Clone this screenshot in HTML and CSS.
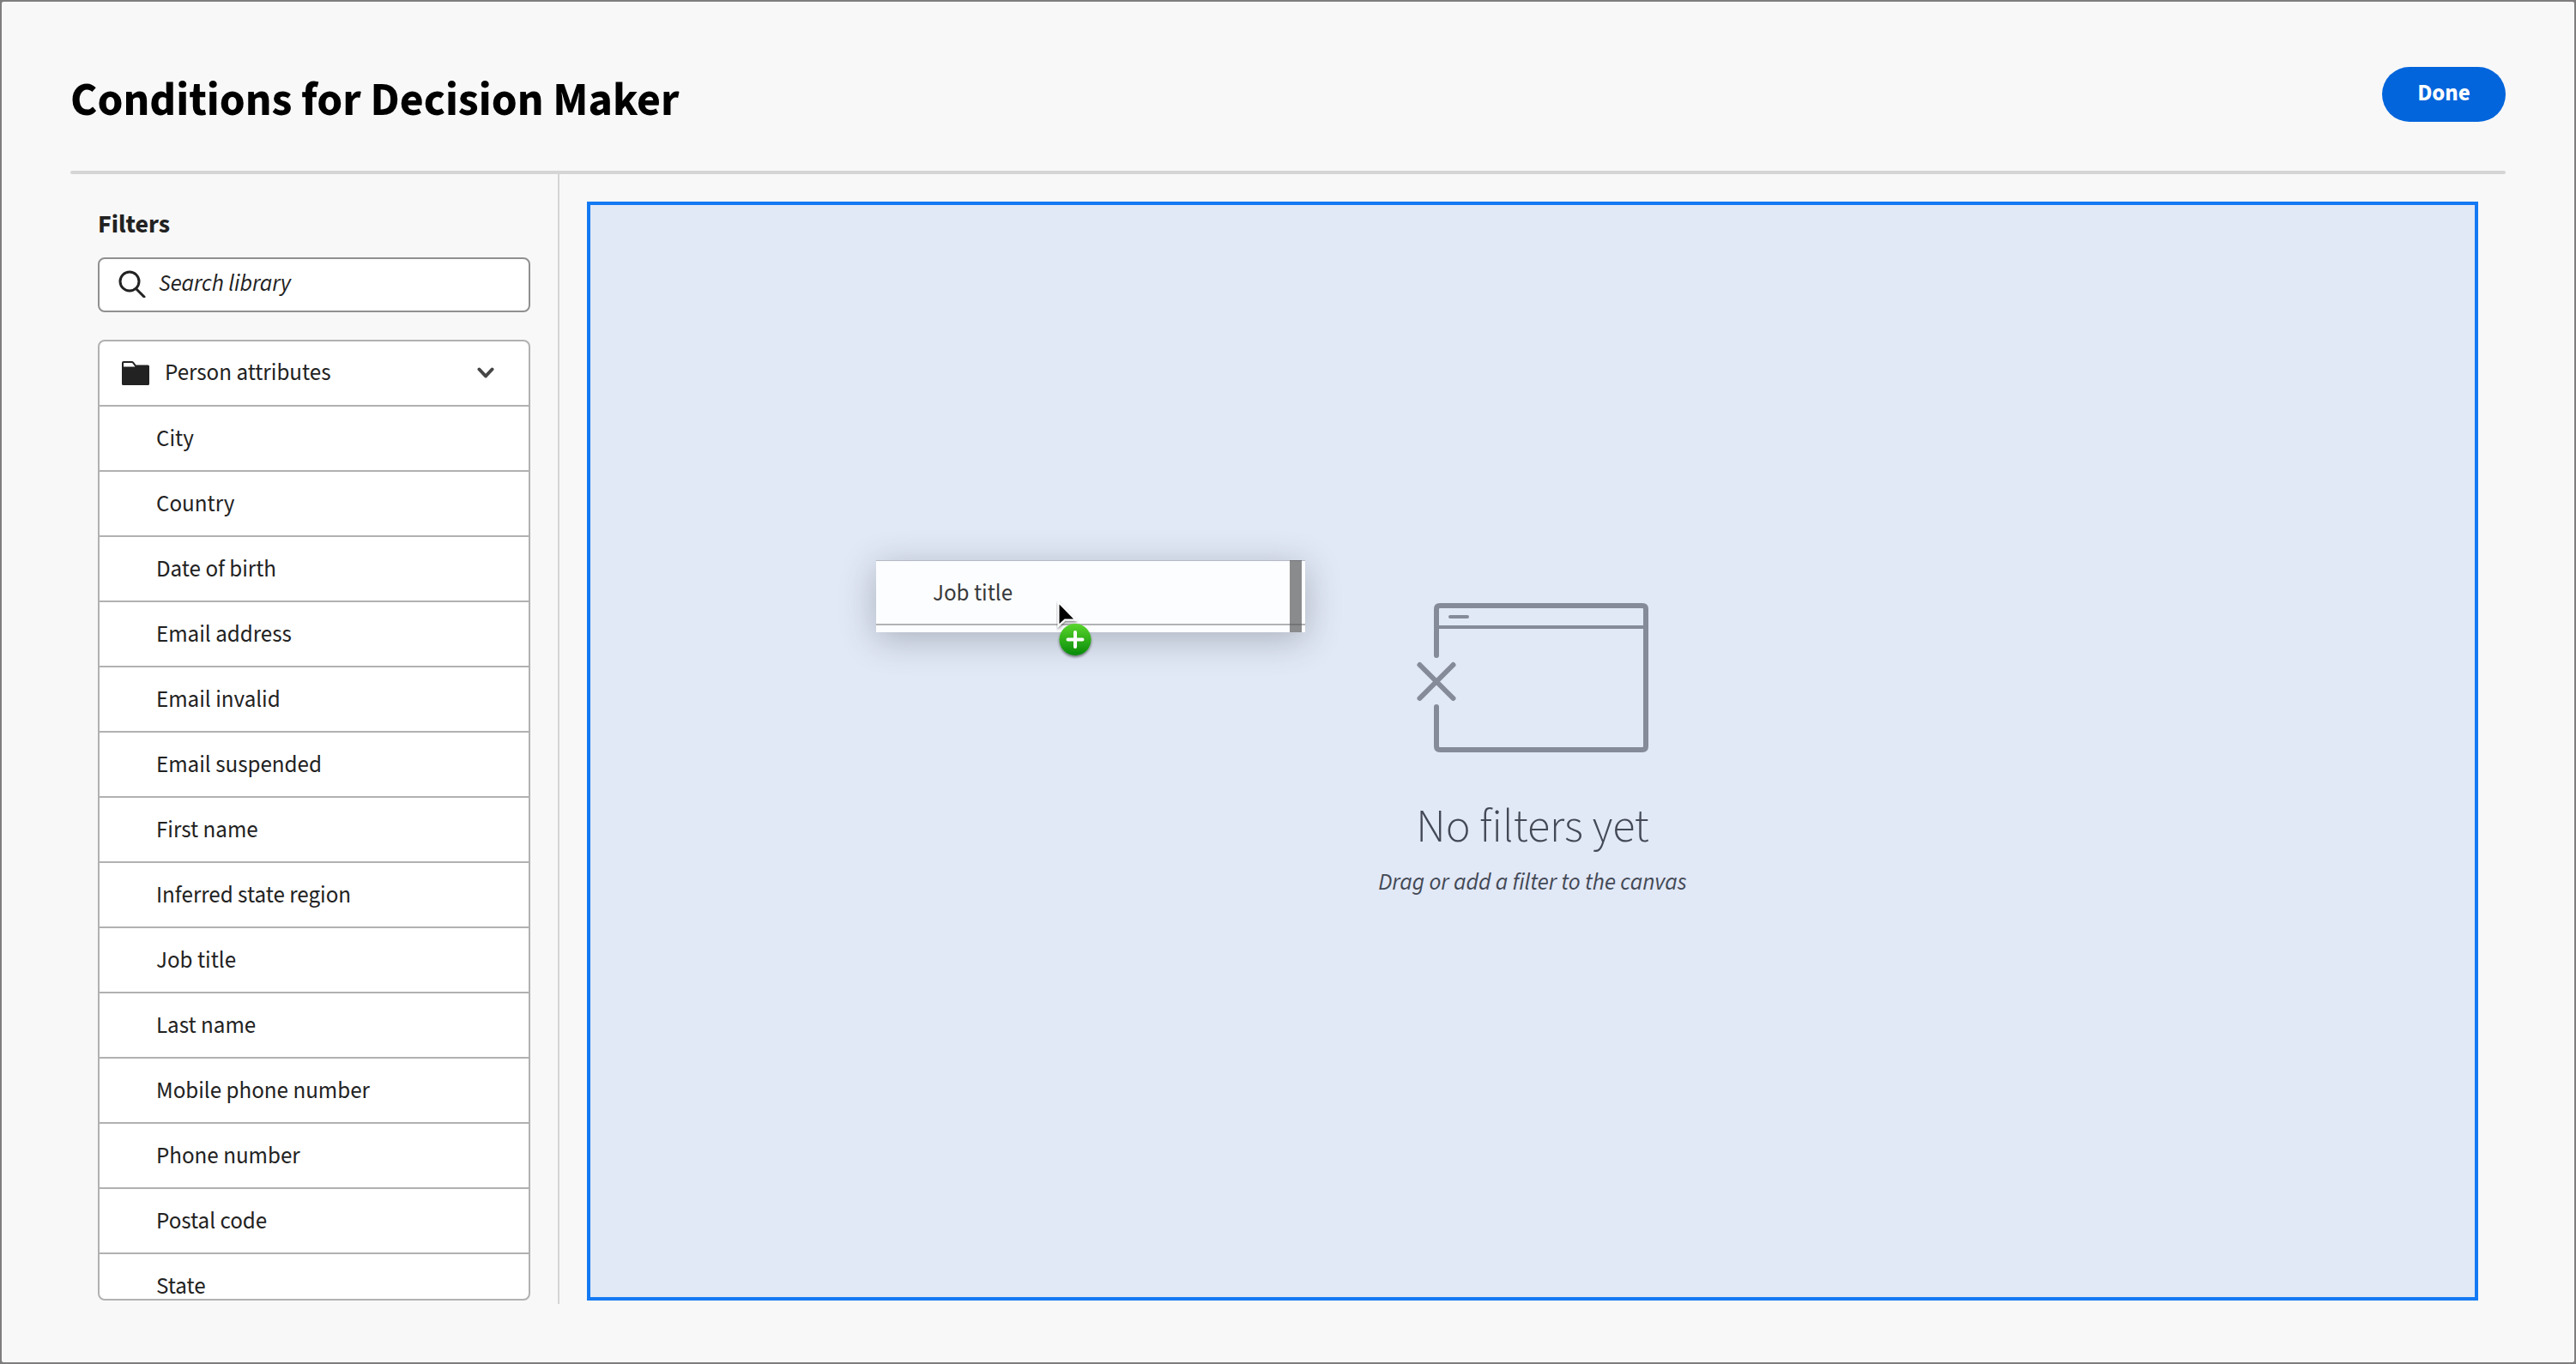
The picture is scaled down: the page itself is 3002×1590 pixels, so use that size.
FILE: index.html
```
<!DOCTYPE html>
<html lang="en">
<head>
<meta charset="utf-8">
<meta name="viewport" content="width=device-width, initial-scale=1">
<title>Conditions for Decision Maker</title>
<link rel="stylesheet" href="styles.css">
</head>
<body>
<div class="dialog">
  <header class="dialog-header">
    <h1 class="dialog-title">Conditions for Decision Maker</h1>
    <button class="done-button" type="button">Done</button>
  </header>
  <main class="workspace">
    <aside class="sidebar">
      <h2 class="sidebar-title">Filters</h2>
      <label class="search">
        <svg class="search-icon" viewBox="0 0 32 32" aria-hidden="true"><circle cx="13" cy="13" r="11"/><path d="M20.500 21.500L30 31"/></svg>
        <input class="search-input" type="search" placeholder="Search library" aria-label="Search library">
      </label>
      <section class="library">
        <button class="library-header" type="button" aria-expanded="true">
          <svg class="folder-icon" viewBox="0 0 32 28" aria-hidden="true"><path fill-rule="evenodd" d="M2 0H11.500Q13 0 14 1.200L16.500 4.500H30.500Q32 4.500 32 6V26.500Q32 28 30.500 28H1.500Q0 28 0 26.500V2Q0 0 2 0ZM2 2.500V6.500H15.500L12.500 2.500Q12 2 11.500 2H2.500Q2 2 2 2.500Z"/></svg>
          <span class="library-name">Person attributes</span>
          <svg class="chevron-icon" viewBox="0 0 20 14" aria-hidden="true"><path d="M2.500 2.500L10 10.500L17.500 2.500"/></svg>
        </button>
        <ul class="attributes">
          <li class="attribute">City</li>
          <li class="attribute">Country</li>
          <li class="attribute">Date of birth</li>
          <li class="attribute">Email address</li>
          <li class="attribute">Email invalid</li>
          <li class="attribute">Email suspended</li>
          <li class="attribute">First name</li>
          <li class="attribute">Inferred state region</li>
          <li class="attribute">Job title</li>
          <li class="attribute">Last name</li>
          <li class="attribute">Mobile phone number</li>
          <li class="attribute">Phone number</li>
          <li class="attribute">Postal code</li>
          <li class="attribute">State</li>
        </ul>
      </section>
    </aside>
    <section class="canvas" aria-label="Filter canvas">
      <div class="empty-state">
        <svg class="empty-icon" viewBox="0 0 272 176" aria-hidden="true">
          <path class="thick" d="M24 61V7Q24 3 28 3H264Q268 3 268 7V167Q268 171 264 171H28Q24 171 24 167V121"/>
          <path class="thin" d="M26 28H266M40 16H60"/>
          <path class="thick" d="M4.500 72L43.500 111M43.500 72L4.500 111"/>
        </svg>
        <h2 class="empty-title">No filters yet</h2>
        <p class="empty-text">Drag or add a filter to the canvas</p>
      </div>
      <div class="drag-preview">
        <div class="drag-item">Job title</div>
        <div class="drag-scrollbar"></div>
        <svg class="drag-cursor" viewBox="0 0 48 72" aria-hidden="true">
          <defs>
            <linearGradient id="badge" x1="0" y1="0" x2="0" y2="1"><stop offset="0" stop-color="#5ad62c"/><stop offset="1" stop-color="#078a08"/></linearGradient>
            <filter id="shade" x="-30%" y="-30%" width="160%" height="170%"><feDropShadow dx="0" dy="2" stdDeviation="1.500" flood-opacity=".5"/></filter>
          </defs>
          <path filter="url(#shade)" d="M2.500 2V29.500L10 22.500H22.500Z" fill="#000" stroke="#fff" stroke-width="2"/>
          <circle filter="url(#shade)" cx="22" cy="45.500" r="18.500" fill="url(#badge)"/>
          <path d="M22 37V54M13.500 45.500H30.500" fill="none" stroke="#fff" stroke-width="4" stroke-linecap="round"/>
        </svg>
      </div>
    </section>
  </main>
</div>
</body>
</html>
```
FILE: styles.css
```
* {
  box-sizing: border-box;
}

body {
  margin: 0;
  background: #7f7d7d;
  color: #222;
  font-family: "Source Sans 3", "Noto Sans CJK JP", sans-serif;
  font-size: 27px;
  line-height: 36px;
}

h1,
h2,
p,
ul {
  margin: 0;
  padding: 0;
}

button,
input {
  font: inherit;
  color: inherit;
}

.dialog {
  display: flex;
  flex-direction: column;
  height: 100vh;
  padding: 76px 80px 68px;
  border: 2px solid #7f7d7d;
  border-radius: 4px;
  background: #f8f8f8;
}

.dialog-header {
  display: flex;
  justify-content: space-between;
  align-items: flex-start;
  height: 121px;
}

.dialog-title {
  padding-top: 8px;
  color: #000;
  font-size: 54px;
  font-weight: 700;
  line-height: 64px;
}

.done-button {
  width: 144px;
  height: 64px;
  padding: 0 0 2px;
  border: 0;
  border-radius: 32px;
  background: #0265dc;
  color: #fff;
  font-weight: 700;
}

.workspace {
  position: relative;
  display: flex;
  flex: 1;
  min-height: 0;
  padding-top: 4px;
}

.workspace::before {
  content: "";
  position: absolute;
  top: 0;
  left: 0;
  right: 0;
  height: 4px;
  border-radius: 2px;
  background: #d5d5d5;
}

.sidebar {
  display: flex;
  flex-direction: column;
  flex: 0 0 570px;
  min-height: 0;
  padding: 39px 32px 4px;
  border-right: 2px solid #d5d5d5;
}

.sidebar-title {
  margin-bottom: 18px;
  font-size: 30px;
  font-weight: 700;
  line-height: 40px;
}

.search {
  display: flex;
  flex: none;
  align-items: center;
  height: 64px;
  padding: 0 22px 2px;
  border: 2px solid #909090;
  border-radius: 8px;
  background: #fff;
}

.search-icon {
  flex: none;
  width: 32px;
  height: 32px;
  margin-right: 15px;
  fill: none;
  stroke: #222;
  stroke-width: 3;
  stroke-linecap: round;
}

.search-input {
  flex: 1;
  min-width: 0;
  padding: 0;
  border: 0;
  outline: 0;
  background: none;
}

.search-input::placeholder {
  color: #222;
  font-style: italic;
  opacity: 1;
}

.library {
  flex: 1;
  min-height: 0;
  margin-top: 32px;
  overflow: hidden;
  border: 2px solid #b1b1b1;
  border-radius: 8px;
  background: #fff;
}

.library-header {
  display: flex;
  align-items: center;
  width: 100%;
  height: 76px;
  padding: 0 40px 0 26px;
  border: 0;
  border-bottom: 2px solid #b1b1b1;
  background: none;
  text-align: left;
}

.folder-icon {
  flex: none;
  width: 32px;
  height: 28px;
  margin-right: 18px;
  fill: #222;
}

.library-name {
  flex: 1;
}

.chevron-icon {
  width: 20px;
  height: 14px;
  fill: none;
  stroke: #464646;
  stroke-width: 4;
  stroke-linecap: round;
  stroke-linejoin: round;
}

.attributes {
  list-style: none;
}

.attribute {
  height: 76px;
  padding: 20px 32px 18px 66px;
  border-bottom: 2px solid #b1b1b1;
}

.canvas {
  position: relative;
  display: flex;
  flex: 1;
  justify-content: center;
  margin: 32px 32px 4px;
  border: 4px solid #147af3;
  background: #e1e8f6;
}

.empty-state {
  display: flex;
  flex-direction: column;
  align-items: center;
  padding-top: 464px;
  color: #434955;
}

.empty-icon {
  width: 272px;
  height: 176px;
  fill: none;
  stroke: #858b99;
  stroke-linecap: round;
}

.thick {
  stroke-width: 6;
}

.thin {
  stroke-width: 4;
}

.empty-title {
  margin-top: 54px;
  font-size: 54px;
  font-weight: 300;
  line-height: 64px;
}

.empty-text {
  margin-top: 14px;
  font-style: italic;
}

.drag-preview {
  position: absolute;
  top: 414px;
  left: 333px;
  width: 500px;
  height: 84px;
  border-top: 1px solid #b5bac4;
  background: #fcfdff;
  box-shadow: 0 8px 40px rgba(60, 64, 72, .32);
  color: #38393b;
}

.drag-item {
  height: 75px;
  padding: 20px 66px 17px;
  border-bottom: 2px solid #b1b2b4;
}

.drag-scrollbar {
  position: absolute;
  top: -1px;
  right: 4px;
  bottom: 0;
  width: 14px;
  background: rgba(90, 90, 92, .7);
}

.drag-cursor {
  position: absolute;
  top: 46px;
  left: 210px;
  width: 48px;
  height: 72px;
}
```
